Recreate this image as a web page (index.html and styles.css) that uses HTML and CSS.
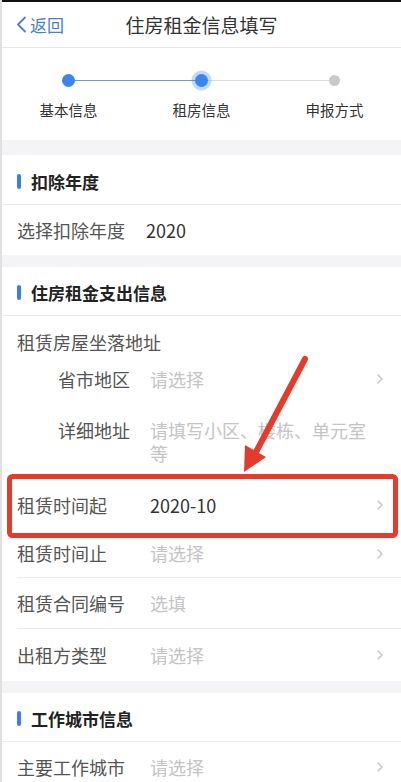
FILE: index.html
```html
<!DOCTYPE html>
<html lang="zh-CN">
<head>
<meta charset="utf-8">
<title>住房租金信息填写</title>
<link rel="stylesheet" href="styles.css">
</head>
<body>
<div class="page">
  <div class="statusline"></div>
  <header class="nav">
    <div class="back">
      <svg viewBox="0 0 11 17" aria-hidden="true"><polyline points="9,1.5 2,8.5 9,15.5" fill="none" stroke="#4a80cc" stroke-width="1.8" stroke-linecap="round" stroke-linejoin="round"/></svg>
      <span>返回</span>
    </div>
    <div class="title">住房租金信息填写</div>
    <div></div>
  </header>

  <div class="steps">
    <div class="step step1"><div class="track"><span class="dot"></span></div><div class="step-label">基本信息</div></div>
    <div class="step step2"><div class="track"><span class="dot current"></span></div><div class="step-label">租房信息</div></div>
    <div class="step step3"><div class="track"><span class="dot todo"></span></div><div class="step-label">申报方式</div></div>
  </div>

  <div class="gap gap-top"></div>
  <div class="sec">扣除年度</div>
  <div class="row last">
    <div class="label auto">选择扣除年度</div>
    <div class="value">2020</div>
  </div>

  <div class="gap"></div>
  <div class="sec sec-b">住房租金支出信息</div>
  <div class="row addr-head">
    <div class="label">租赁房屋坐落地址</div>
  </div>
  <div class="row sub h36">
    <div class="label">省市地区</div>
    <div class="value placeholder">请选择</div>
    <svg class="chev" viewBox="0 0 6 10" aria-hidden="true"><polyline points="1,1 5,5 1,9" fill="none" stroke="#c4c4c4" stroke-width="1.4" stroke-linecap="round" stroke-linejoin="round"/></svg>
  </div>
  <div class="row sub detail">
    <div class="label">详细地址</div>
    <div class="value placeholder wrap">请填写小区、楼栋、单元室等</div>
  </div>
  <div class="row h50 noline">
    <div class="label">租赁时间起</div>
    <div class="value">2020-10</div>
    <svg class="chev" viewBox="0 0 6 10" aria-hidden="true"><polyline points="1,1 5,5 1,9" fill="none" stroke="#c4c4c4" stroke-width="1.4" stroke-linecap="round" stroke-linejoin="round"/></svg>
  </div>
  <div class="row h48">
    <div class="label">租赁时间止</div>
    <div class="value placeholder">请选择</div>
    <svg class="chev" viewBox="0 0 6 10" aria-hidden="true"><polyline points="1,1 5,5 1,9" fill="none" stroke="#c4c4c4" stroke-width="1.4" stroke-linecap="round" stroke-linejoin="round"/></svg>
  </div>
  <div class="row h51">
    <div class="label">租赁合同编号</div>
    <div class="value placeholder">选填</div>
  </div>
  <div class="row h52 last">
    <div class="label">出租方类型</div>
    <div class="value placeholder">请选择</div>
    <svg class="chev" viewBox="0 0 6 10" aria-hidden="true"><polyline points="1,1 5,5 1,9" fill="none" stroke="#c4c4c4" stroke-width="1.4" stroke-linecap="round" stroke-linejoin="round"/></svg>
  </div>

  <div class="gap"></div>
  <div class="sec sec-b">工作城市信息</div>
  <div class="row last">
    <div class="label">主要工作城市</div>
    <div class="value placeholder">请选择</div>
    <svg class="chev" viewBox="0 0 6 10" aria-hidden="true"><polyline points="1,1 5,5 1,9" fill="none" stroke="#c4c4c4" stroke-width="1.4" stroke-linecap="round" stroke-linejoin="round"/></svg>
  </div>

  <svg class="annot" viewBox="0 0 401 782" aria-hidden="true">
    <rect x="9.5" y="476.5" width="386" height="59" rx="3" ry="3" fill="none" stroke="#e53b2d" stroke-width="5"/>
    <line x1="305" y1="359" x2="256" y2="452" stroke="#e53b2d" stroke-width="6" stroke-linecap="round"/>
    <polygon points="244,472 266,457 245,445" fill="#e53b2d"/>
  </svg>
</div>
</body>
</html>
```

FILE: styles.css
```css
* {
  box-sizing: border-box;
  margin: 0;
  padding: 0;
}

body {
  margin: 0;
  background: #fff;
  font-family: "Noto Sans CJK SC", "Noto Sans", sans-serif;
  color: #333;
}

.page {
  position: relative;
  width: 401px;
  height: 782px;
  border-left: 2px solid #e0e0e0;
  overflow: hidden;
  background: #fff;
}

.statusline {
  height: 2px;
  background: #111;
}

.nav {
  height: 46px;
  display: grid;
  grid-template-columns: 1fr auto 1fr;
  align-items: center;
  border-bottom: 1px solid #e6e6e6;
}

.back {
  display: flex;
  align-items: center;
  gap: 3px;
  padding-left: 14px;
  color: #4a80cc;
  font-size: 17px;
  line-height: 22px;
}

.back svg {
  width: 11px;
  height: 17px;
}

.title {
  font-size: 19px;
  color: #333;
  line-height: 24px;
}

.steps {
  height: 92px;
  display: grid;
  grid-template-columns: repeat(3, 1fr);
}

.step {
  display: flex;
  flex-direction: column;
  align-items: center;
}

.track {
  position: relative;
  width: 100%;
  height: 20px;
  margin-top: 22px;
  display: flex;
  justify-content: center;
  align-items: center;
}

.track::before,
.track::after {
  content: "";
  position: absolute;
  top: 9.5px;
  height: 1.5px;
}

.track::before {
  left: 0;
  right: 50%;
}

.track::after {
  left: 50%;
  right: 0;
}

.step1 .track::after,
.step2 .track::before {
  background: #6b9bd3;
}

.step2 .track::after,
.step3 .track::before {
  background: #dcdcdc;
}

.dot {
  position: relative;
  z-index: 1;
  width: 13px;
  height: 13px;
  border-radius: 50%;
  background: #3a86f0;
}

.dot.current {
  box-shadow: 0 0 0 3.5px rgba(58, 134, 240, 0.3);
}

.dot.todo {
  width: 11px;
  height: 11px;
  background: #c9c9c9;
}

.step-label {
  margin-top: 10px;
  font-size: 14.5px;
  line-height: 20px;
  color: #333;
}

.gap {
  height: 12px;
  background: #f4f4f6;
}

.gap-top {
  height: 15px;
}

.sec {
  height: 50px;
  display: flex;
  align-items: center;
  padding-left: 15px;
  padding-top: 3px;
  border-bottom: 1px solid #ececec;
  font-weight: bold;
  font-size: 17px;
  color: #222;
}

.sec-b {
  height: 49px;
}

.sec::before {
  content: "";
  width: 4px;
  height: 15px;
  border-radius: 2px;
  background: #3b7fe0;
  margin-right: 10px;
}

.row {
  display: flex;
  align-items: center;
  height: 50px;
  margin-left: 15px;
  padding-right: 18px;
  border-bottom: 1px solid #ececec;
  font-size: 18px;
  line-height: 23px;
}

.row.last,
.row.noline,
.row.addr-head,
.row.sub {
  border-bottom: 0;
}

.label {
  width: 133px;
  flex-shrink: 0;
  color: #555;
}

.label.auto {
  width: auto;
  margin-right: 21px;
}

.value {
  flex: 1;
  color: #333;
}

.placeholder {
  color: #c4c4c4;
}

.chev {
  width: 6px;
  height: 10px;
  flex-shrink: 0;
}

.addr-head {
  height: 45px;
  align-items: flex-start;
  padding-top: 15px;
}

.addr-head .label {
  width: auto;
}

.sub {
  margin-left: 56px;
}

.sub .label {
  width: 92px;
}

.h36 {
  height: 36px;
}

.detail {
  height: 83px;
  align-items: flex-start;
  padding-top: 22px;
}

.wrap {
  padding-right: 10px;
}

.h48 {
  height: 48px;
}

.h50 {
  height: 50px;
}

.h51 {
  height: 51px;
}

.h52 {
  height: 52px;
}

.annot {
  position: absolute;
  top: 0;
  left: -2px;
  width: 401px;
  height: 782px;
  pointer-events: none;
}
```
